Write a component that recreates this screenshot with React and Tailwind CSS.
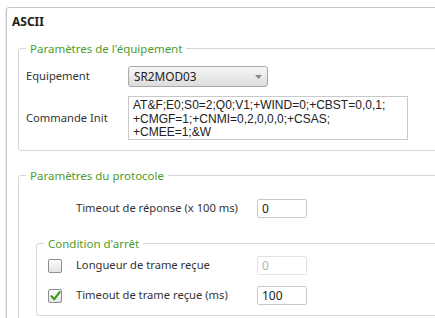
import { useState } from "react";

const ui = { fontFamily: '"Noto Sans", "Open Sans", sans-serif' };
const mono = { fontFamily: '"Liberation Sans", Arial, sans-serif' };

const Check = ({ checked }) => (
  <div className="w-[14px] h-[14px] rounded-[2px] border border-[#8e8e8e] bg-gradient-to-b from-[#fdfdfd] to-[#e4e4e4] flex items-center justify-center shrink-0">
    {checked && (
      <svg width="11" height="10" viewBox="0 0 11 10">
        <path d="M1.5 5.2 L4.3 8.2 L9.6 1.2" fill="none" stroke="#3f9a22" strokeWidth="2.2" strokeLinecap="round" strokeLinejoin="round" />
      </svg>
    )}
  </div>
);

const Field = ({ value, disabled }) => (
  <div
    className={
      "w-[50px] h-[19px] rounded-[2px] border px-[4px] text-[12px] leading-[17px] " +
      (disabled ? "border-[#e2e2e2] text-[#b4b4b4]" : "border-[#c9c9c9] text-[#222]")
    }
    style={ui}
  >
    {value}
  </div>
);

export default function App() {
  const [checks] = useState([false, true]);

  return (
    <div className="w-[435px] h-[318px] overflow-hidden bg-white" style={ui}>
      <div className="ml-[6px] mt-[7px] w-[480px] h-[340px] border border-[#c6c6c6] rounded-[3px] shadow-[-1px_0_0_#ececec]">
        {/* Header */}
        <div className="h-[32px] pl-[5px] pt-[5px] text-[12px] font-bold text-[#1e1e1e]">ASCII</div>

        {/* Paramètres de l'équipement */}
        <fieldset className="ml-[11px] border border-[#d6d6d6] rounded-[3px] pl-[7px] pt-[9px] pb-[10px]">
          <legend className="px-[4px] text-[11.5px] leading-[17px] text-[#4e9c2c]">
            Paramètres de l'équipement
          </legend>
          <div className="flex items-center h-[21px]">
            <div className="w-[102px] text-[11.2px] text-[#333]">Equipement</div>
            <div className="w-[140px] h-[21px] rounded-[3px] border border-[#a8a8a8] bg-gradient-to-b from-[#f7f7f7] to-[#dcdcdc] flex items-center justify-between pl-[5px] pr-[5px]">
              <span className="text-[11.8px] text-[#222]">SR2MOD03</span>
              <svg width="7" height="4" viewBox="0 0 7 4">
                <path d="M0 0 L7 0 L3.5 4 Z" fill="#888" />
              </svg>
            </div>
          </div>
          <div className="flex items-center mt-[9px]">
            <div className="w-[102px] text-[11.2px] text-[#333]">Commande Init</div>
            <div className="w-[280px] h-[44px] border border-[#c9c9c9] pl-[4px] pt-[2px] text-[12px] leading-[13.5px] text-[#222]" style={mono}>
              AT&amp;F;E0;S0=2;Q0;V1;+WIND=0;+CBST=0,0,1;
              <br />
              +CMGF=1;+CNMI=0,2,0,0,0;+CSAS;
              <br />
              +CMEE=1;&amp;W
            </div>
          </div>
        </fieldset>

        {/* Paramètres du protocole */}
        <fieldset className="ml-[11px] mt-[16px] border border-[#d6d6d6] rounded-[3px] pt-[15px] pb-[20px]">
          <legend className="ml-[7px] px-[4px] text-[11.5px] leading-[17px] text-[#4e9c2c]">
            Paramètres du protocole
          </legend>
          <div className="flex items-center h-[19px] pl-[57px]">
            <div className="w-[181px] text-[11.2px] text-[#333]">Timeout de réponse (x 100 ms)</div>
            <Field value="0" />
          </div>

          {/* Condition d'arrêt */}
          <fieldset className="ml-[17px] mt-[17px] border border-[#d6d6d6] rounded-[3px] pl-[11px] pt-[4px] pb-[10px]">
            <legend className="-ml-[4px] px-[4px] text-[11.5px] leading-[17px] text-[#4e9c2c]">
              Condition d'arrêt
            </legend>
            <div className="flex items-center h-[19px]">
              <Check checked={checks[0]} />
              <div className="ml-[14px] w-[181px] text-[11.2px] text-[#333]">Longueur de trame reçue</div>
              <Field value="0" disabled />
            </div>
            <div className="flex items-center h-[19px] mt-[11px]">
              <Check checked={checks[1]} />
              <div className="ml-[14px] w-[181px] text-[11.2px] text-[#333]">Timeout de trame reçue (ms)</div>
              <Field value="100" />
            </div>
          </fieldset>
        </fieldset>
      </div>
    </div>
  );
}
